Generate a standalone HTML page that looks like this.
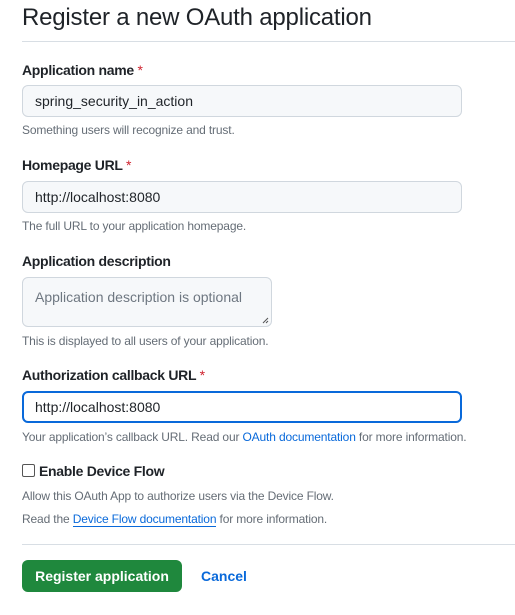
<!DOCTYPE html>
<html><head><style>
*{box-sizing:border-box;margin:0;padding:0}
body{width:515px;height:615px;background:#fff;font-family:"Liberation Sans",sans-serif;color:#1f2328;position:relative;overflow:hidden}
.a{position:absolute;white-space:nowrap}
h1{position:absolute;left:22px;top:3px;font-size:24px;font-weight:400;line-height:30px;letter-spacing:-0.2px}
.hr{position:absolute;left:22px;right:0;height:1px;background:#d8dee4}
.lbl{font-size:14px;font-weight:700;line-height:18px;letter-spacing:-0.3px}
.lbl span{color:#cf222e;font-weight:400}
.in{position:absolute;left:22px;width:440px;height:32px;background:#f6f8fa;border:1px solid #d0d7de;border-radius:6px;font-size:14px;padding:0 12px;line-height:30px}
.help{font-size:12px;color:#656d76;line-height:16px;letter-spacing:-0.15px}
a{color:#0969da;text-decoration:none}
</style></head><body>
<h1>Register a new OAuth application</h1>
<div class="hr" style="top:41px"></div>

<div class="a lbl" style="left:22px;top:61px">Application name <span>*</span></div>
<div class="in" style="top:85px">spring_security_in_action</div>
<div class="a help" style="left:22px;top:122px">Something users will recognize and trust.</div>

<div class="a lbl" style="left:22px;top:156px">Homepage URL <span>*</span></div>
<div class="in" style="top:181px">http://localhost:8080</div>
<div class="a help" style="left:22px;top:218px">The full URL to your application homepage.</div>

<div class="a lbl" style="left:22px;top:252px">Application description</div>
<div class="in" style="top:277px;width:250px;height:50px;color:#6e7781;line-height:38px">Application description is optional</div>
<svg class="a" style="left:262px;top:317px" width="7" height="7"><path d="M1 6L6 1M4 6L6 4" stroke="#555" stroke-width="1"/></svg>
<div class="a help" style="left:22px;top:333px">This is displayed to all users of your application.</div>

<div class="a lbl" style="left:22px;top:366px">Authorization callback URL <span>*</span></div>
<div class="in" style="top:391px;background:#fff;border:2px solid #0969da;line-height:28px;padding-left:11px">http://localhost:8080</div>
<div class="a help" style="left:22px;top:429px">Your application’s callback URL. Read our <a>OAuth documentation</a> for more information.</div>

<div class="a" style="left:22px;top:464px;width:13px;height:13px;border:1px solid #555;border-radius:2px"></div>
<div class="a lbl" style="left:39px;top:462px">Enable Device Flow</div>
<div class="a help" style="left:22px;top:488px">Allow this OAuth App to authorize users via the Device Flow.</div>
<div class="a help" style="left:22px;top:511px">Read the <a style="border-bottom:1px solid #0969da">Device Flow documentation</a> for more information.</div>

<div class="hr" style="top:544px"></div>
<div class="a" style="left:22px;top:560px;width:160px;height:32px;background:#1f883d;border-radius:6px;color:#fff;font-size:14px;font-weight:700;text-align:center;line-height:32px">Register application</div>
<div class="a" style="left:201px;top:567px;font-size:14px;font-weight:700;color:#0969da;line-height:18px">Cancel</div>
</body></html>
